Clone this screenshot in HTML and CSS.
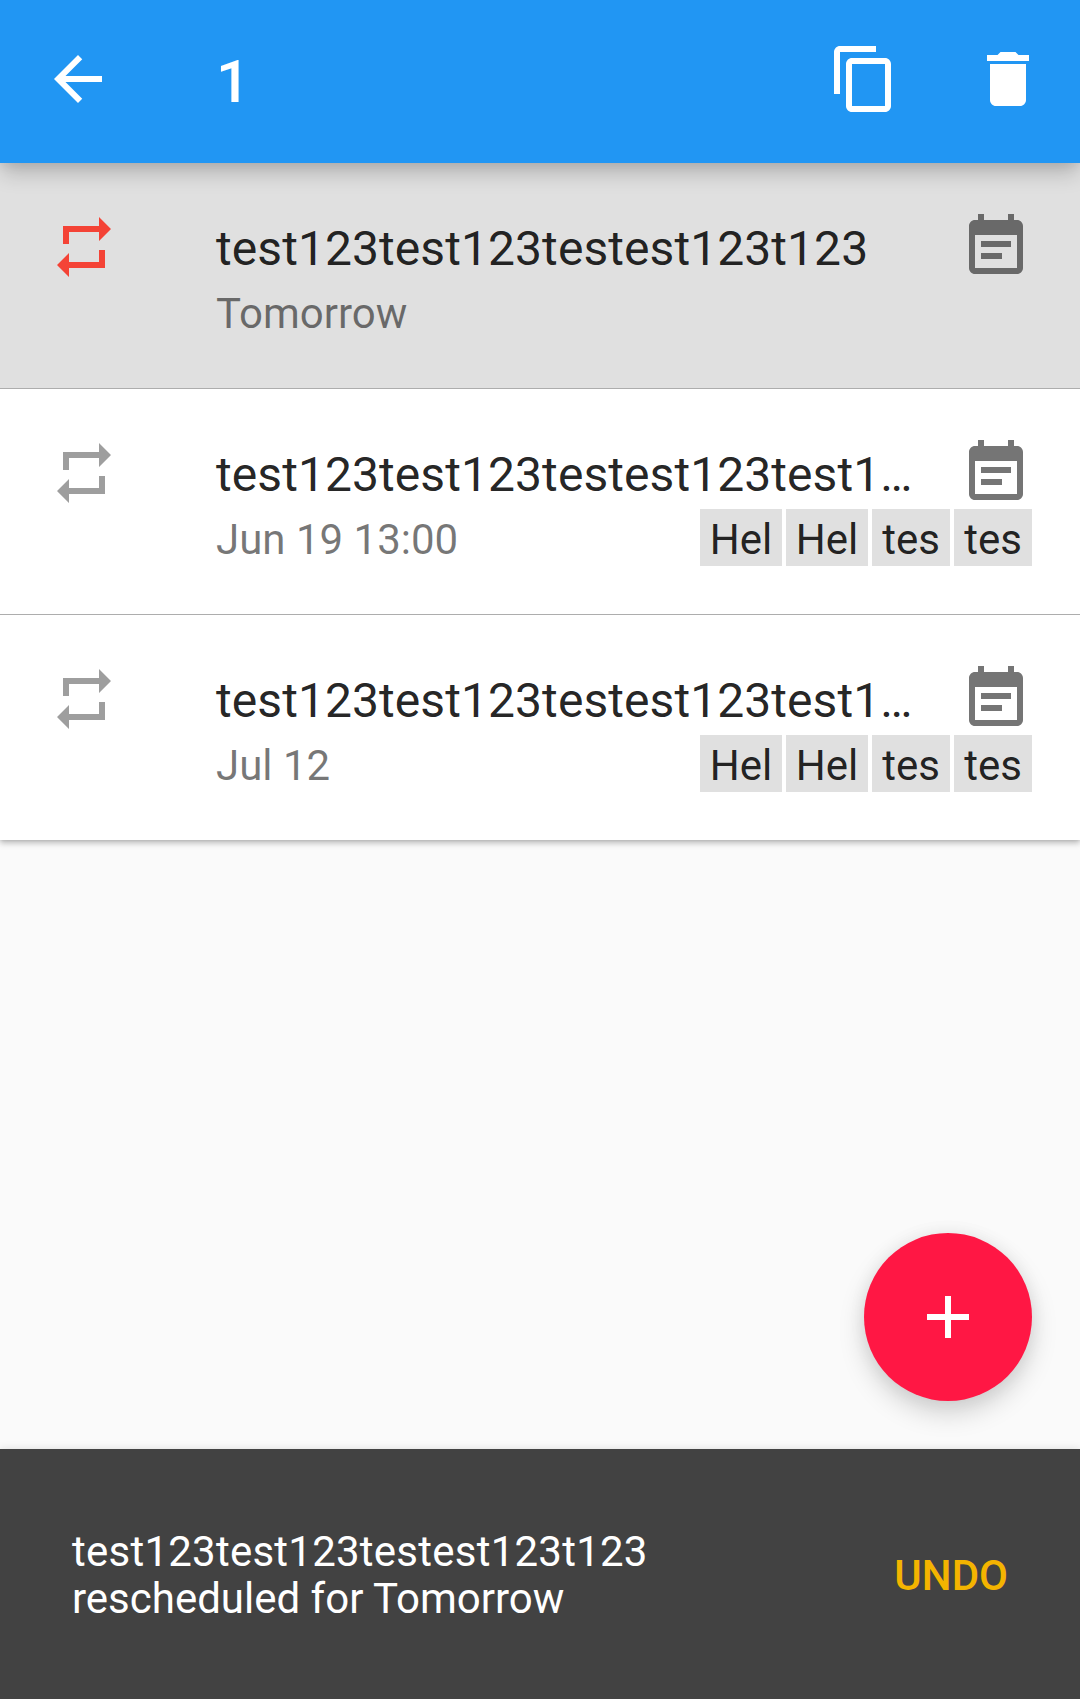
FILE: index.html
```html
<!DOCTYPE html>
<html lang="en">
<head>
<meta charset="utf-8">
<title>Tasks</title>
<link rel="stylesheet" href="styles.css">
</head>
<body>
<svg width="0" height="0" class="sprite">
  <symbol id="repeat" viewBox="0 0 24 24"><path d="M7 7h10v3l4-4-4-4v3H5v6h2V7zm10 10H7v-3l-4 4 4 4v-3h12v-6h-2v4z"/></symbol>
  <symbol id="note" viewBox="0 0 24 24"><path d="M17 10H7v2h10v-2zm2-7h-1V1h-2v2H8V1H6v2H5c-1.110 0-2 .9-2 2v14c0 1.100.890 2 2 2h14c1.100 0 2-.9 2-2V5c0-1.100-.9-2-2-2zm0 16H5V8h14v11zm-5-5H7v2h7v-2z"/></symbol>
</svg>
<div class="screen">
  <header class="bar">
    <svg class="icon" viewBox="0 0 24 24"><path d="M20 11H7.830l5.590-5.590L12 4l-8 8 8 8 1.410-1.410L7.830 13H20v-2z"/></svg>
    <h1 class="count">1</h1>
    <svg class="icon" viewBox="0 0 24 24"><path d="M16 1H4c-1.100 0-2 .9-2 2v14h2V3h12V1zm3 4H8c-1.100 0-2 .9-2 2v14c0 1.100.9 2 2 2h11c1.100 0 2-.9 2-2V7c0-1.100-.9-2-2-2zm0 16H8V7h11v14z"/></svg>
    <svg class="icon" viewBox="0 0 24 24"><path d="M6 19c0 1.100.9 2 2 2h8c1.100 0 2-.9 2-2V7H6v12zM19 4h-3.500l-1-1h-5l-1 1H5v2h14V4z"/></svg>
  </header>
  <main class="list">
    <article class="row selected">
      <svg class="icon repeat"><use href="#repeat"/></svg>
      <div class="body">
        <div class="title">test123test123testest123t123</div>
        <div class="meta"><span class="date">Tomorrow</span></div>
      </div>
      <svg class="icon note"><use href="#note"/></svg>
    </article>
    <article class="row">
      <svg class="icon repeat"><use href="#repeat"/></svg>
      <div class="body">
        <div class="title">test123test123testest123test1…</div>
        <div class="meta"><span class="date">Jun 19 13:00</span><span class="tags"><span class="tag">Hel</span><span class="tag">Hel</span><span class="tag">tes</span><span class="tag">tes</span></span></div>
      </div>
      <svg class="icon note"><use href="#note"/></svg>
    </article>
    <article class="row">
      <svg class="icon repeat"><use href="#repeat"/></svg>
      <div class="body">
        <div class="title">test123test123testest123test1…</div>
        <div class="meta"><span class="date">Jul 12</span><span class="tags"><span class="tag">Hel</span><span class="tag">Hel</span><span class="tag">tes</span><span class="tag">tes</span></span></div>
      </div>
      <svg class="icon note"><use href="#note"/></svg>
    </article>
  </main>
  <button class="fab" aria-label="Add"><svg class="icon" viewBox="0 0 24 24"><path d="M19 13h-6v6h-2v-6H5v-2h6V5h2v6h6v2z"/></svg></button>
  <footer class="snackbar">
    <p class="message"><span class="task-name">test123test123testest123t123</span><br>rescheduled for Tomorrow</p>
    <button class="undo">UNDO</button>
  </footer>
</div>
</body>
</html>
```
FILE: styles.css
```css
* { box-sizing: border-box; }
body { margin: 0; font-family: Roboto, sans-serif; background: #fafafa; }
button { border: 0; padding: 0; background: none; font: inherit; }
.sprite { position: absolute; }
.icon { display: block; width: 72px; height: 72px; flex: none; fill: currentColor; }

.screen { display: flex; flex-direction: column; height: 1699px; overflow: hidden; }

.bar {
  display: flex;
  align-items: center;
  flex: none;
  height: 163px;
  padding: 0 36px 5px 42px;
  color: #fff;
  background: #2196f3;
  box-shadow: 0 12px 20px -2px rgba(0, 0, 0, .2), 0 0 12px rgba(0, 0, 0, .1);
  z-index: 1;
}
.count { flex: 1; margin: 0; padding: 6px 0 0 102px; font-size: 60px; font-weight: 500; line-height: 70px; }
.bar .icon:last-child { margin-left: 72px; }

.list { flex: none; background: #fff; box-shadow: 0 3px 6px rgba(0, 0, 0, .26), 0 0 3px rgba(0, 0, 0, .12); }
.row {
  display: grid;
  grid-template-columns: 72px 648px 72px;
  column-gap: 96px;
  height: 225px;
  padding: 48px 48px 0;
}
.row + .row { height: 226px; border-top: 1px solid #adadad; }
/* The second line of a row runs on beneath the note icon. */
.body { width: 816px; }
.repeat { color: #9e9e9e; }
.note { color: #757575; }
.selected { background: #e0e0e0; }
.selected .repeat { color: #f44336; }
.selected .note { color: #696969; }
.title {
  padding-top: 10px;
  color: rgba(0, 0, 0, .87);
  font-size: 48px;
  line-height: 56px;
  letter-spacing: .07px;
  white-space: nowrap;
}
.meta {
  display: flex;
  align-items: flex-start;
  justify-content: space-between;
  height: 57px;
  margin-top: 6px;
  color: rgba(0, 0, 0, .54);
  font-size: 42px;
  line-height: 49px;
}
.date, .tag { padding: 6px 0 2px; }
.tags { display: flex; gap: 4px; }
.tag:nth-child(-n+2) { width: 82px; }
.tag { width: 78px; color: rgba(0, 0, 0, .87); background: #e0e0e0; text-align: center; }

.fab {
  display: flex;
  align-items: center;
  justify-content: center;
  flex: none;
  width: 168px;
  height: 168px;
  margin: auto 48px 48px auto;
  border-radius: 50%;
  color: #fff;
  background: #ff1744;
  box-shadow: 0 12px 26px rgba(0, 0, 0, .17), 0 0 18px rgba(0, 0, 0, .06);
}

.snackbar {
  display: flex;
  align-items: center;
  justify-content: space-between;
  flex: none;
  height: 250px;
  padding: 2px 72px 0;
  color: #fff;
  background: #424242;
  font-size: 42px;
  box-shadow: 0 0 8px rgba(0, 0, 0, .12);
}
.message { margin: 0; line-height: 47px; }
.task-name { letter-spacing: .24px; }
.undo { color: #f4b400; font-weight: 500; line-height: 49px; }
```
